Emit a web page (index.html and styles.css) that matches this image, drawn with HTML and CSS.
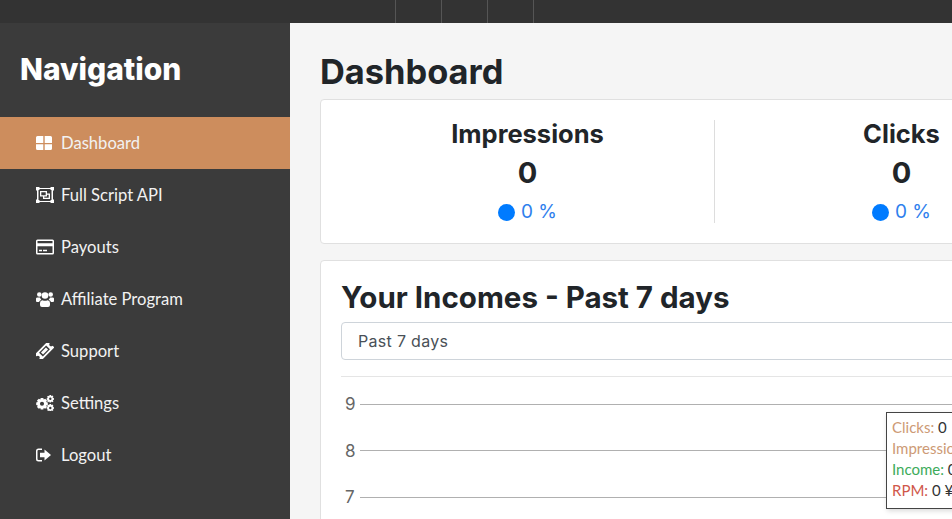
FILE: index.html
```html
<!DOCTYPE html>
<html lang="en">
<head>
    <meta charset="UTF-8">
    <meta name="viewport" content="width=device-width, initial-scale=1.0">
    <title>Dashboard</title>
    <link rel="stylesheet" href="styles.css">
</head>
<body>
    <div class="topbar">
        <span class="topbar-cell"></span>
        <span class="topbar-cell"></span>
        <span class="topbar-cell"></span>
    </div>

    <div class="layout">
        <nav class="sidebar">
            <h2 class="sidebar-title">Navigation</h2>
            <a class="nav-item active" href="#">
                <svg class="nav-icon" viewBox="0 0 18 16"><path d="M0 2.500Q0 1 1.500 1H7.300V8H0zM8.700 1H14.500Q16 1 16 2.500V8H8.700zM0 9.300H7.300V15H1.500Q0 15 0 13.500zM8.700 9.300H16V13.500Q16 15 14.500 15H8.700z"/></svg>
                Dashboard
            </a>
            <a class="nav-item" href="#">
                <svg class="nav-icon" viewBox="0 0 18 16"><path fill-rule="evenodd" d="M0 0H3.500V1H14.500V0H18V3.500H17V12.500H18V16H14.500V15H3.500V16H0V12.500H1V3.500H0zM2.500 3V13H3.500V14H14.500V13H15.500V3H14.500V2H3.500V3z"/><path fill-rule="evenodd" d="M4 4H11V6.500H14V12H7V9.500H4zM5.300 5.300V8.300H9.700V5.300zM11 7.800V9.500H8.300V10.700H12.700V7.800z"/></svg>
                Full Script API
            </a>
            <a class="nav-item" href="#">
                <svg class="nav-icon" viewBox="0 0 18 16"><path fill-rule="evenodd" d="M1.500 0.500H16.500Q18 0.500 18 2V14Q18 15.500 16.500 15.500H1.500Q0 15.500 0 14V2Q0 0.500 1.500 0.500zM1.500 2V4.200H16.500V2zM1.500 7.200V14H16.500V7.200zM3 10.800H6V12.300H3zM7 10.800H11V12.300H7z"/></svg>
                Payouts
            </a>
            <a class="nav-item" href="#">
                <svg class="nav-icon" viewBox="0 0 18 16"><circle cx="3.300" cy="3.500" r="2.300"/><circle cx="14.700" cy="3.500" r="2.300"/><circle cx="9" cy="4.500" r="3.300"/><path d="M0 10V7.500Q0 6.500 1.500 6.500H4Q4.500 8 5.300 8.800Q3.500 9.500 3 11H1Q0 11 0 10zM18 10V7.500Q18 6.500 16.500 6.500H14Q13.500 8 12.700 8.800Q14.500 9.500 15 11H17Q18 11 18 10zM4 12Q4 9.500 6.500 9.200Q9 10.500 11.500 9.200Q14 9.500 14 12V14Q14 16 12 16H6Q4 16 4 14z"/></svg>
                Affiliate Program
            </a>
            <a class="nav-item" href="#">
                <svg class="nav-icon" viewBox="0 0 18 16"><g transform="rotate(-45 8.500 8)"><path fill-rule="evenodd" d="M-1 3.500H18V6Q16 6.500 16 8Q16 9.500 18 10V12.500H-1V10Q1 9.500 1 8Q1 6.500 -1 6zM3.500 5.300V10.700H13.500V5.300z"/><rect x="5" y="6.500" width="7" height="3"/></g></svg>
                Support
            </a>
            <a class="nav-item" href="#">
                <svg class="nav-icon" viewBox="0 0 18 16"><path fill-rule="evenodd" d="M4.700 3H7.300L7.700 4.500L9.200 3.800L11 5.600L10.200 7L11.800 7.500V10L10.200 10.500L11 12L9.200 13.800L7.700 13L7.300 14.500H4.700L4.300 13L2.800 13.800L1 12L1.800 10.500L0.200 10V7.500L1.800 7L1 5.600L2.800 3.800L4.300 4.500zM6 6.700A2 2 0 1 0 6 10.800A2 2 0 1 0 6 6.700z"/><path fill-rule="evenodd" d="M13.500 0H15L15.300 1L16.500 0.600L17.500 2L16.500 2.800L18 3.300V4.700L16.700 5L17.500 6.200L16.300 7.200L15.300 6.500L15 7.500H13.500L13.200 6.500L12.200 7.200L11 6L11.800 5L10.700 4.700V3.300L11.800 3L11 1.800L12.200 0.700L13.200 1.300zM14.300 2.600A1.200 1.200 0 1 0 14.300 5A1.200 1.200 0 1 0 14.300 2.600z"/><path fill-rule="evenodd" d="M13.500 9H15L15.300 10L16.500 9.600L17.500 11L16.700 12L18 12.300V13.700L16.700 14L17.500 15L16.300 16L15.300 15.500L15 16H13.500L13.200 15.500L12.200 16L11 15L11.800 14L10.700 13.700V12.300L11.800 12L11 11L12.200 9.700L13.200 10zM14.300 11.800A1.200 1.200 0 1 0 14.300 14.200A1.200 1.200 0 1 0 14.300 11.800z"/></svg>
                Settings
            </a>
            <a class="nav-item" href="#">
                <svg class="nav-icon" viewBox="0 0 18 16"><path d="M2.500 1.500H6V3H2.500Q1.500 3 1.500 4V12Q1.500 13 2.500 13H6V14.500H2.500Q0 14.500 0 12V4Q0 1.500 2.500 1.500z"/><path d="M8.500 2.500L15 8L8.500 13.500V10.300H4V5.700H8.500z"/></svg>
                Logout
            </a>
        </nav>

        <main class="main">
            <div class="main-inner">
                <h1 class="page-title">Dashboard</h1>

                <section class="card stats">
                    <div class="stat">
                        <h3 class="stat-name">Impressions</h3>
                        <div class="stat-value">0</div>
                        <div class="stat-change"><span class="dot"></span>0 %</div>
                    </div>
                    <div class="stat">
                        <h3 class="stat-name">Clicks</h3>
                        <div class="stat-value">0</div>
                        <div class="stat-change"><span class="dot"></span>0 %</div>
                    </div>
                </section>

                <section class="card incomes">
                    <h2 class="card-title">Your Incomes - Past 7 days</h2>
                    <div class="select">Past 7 days</div>
                    <hr class="divider">
                    <div class="chart">
                        <div class="chart-row"><span class="chart-label">9</span><span class="chart-line"></span></div>
                        <div class="chart-row"><span class="chart-label">8</span><span class="chart-line"></span></div>
                        <div class="chart-row"><span class="chart-label">7</span><span class="chart-line"></span></div>
                        <div class="tooltip">
                            <div><span class="tip-clicks">Clicks:</span> 0</div>
                            <div><span class="tip-clicks">Impressions:</span> 0</div>
                            <div><span class="tip-income">Income:</span> 0 ¥</div>
                            <div><span class="tip-rpm">RPM:</span> 0 ¥</div>
                        </div>
                    </div>
                </section>
            </div>
        </main>
    </div>
</body>
</html>
```

FILE: styles.css
```css
html, body {
    height: 100%;
    margin: 0;
    overflow: hidden;
}
body {
    display: flex;
    flex-direction: column;
    font-family: Lato, "Open Sans", sans-serif;
    color: #212529;
    background-color: #f5f5f5;
}
.topbar {
    display: flex;
    flex: 0 0 23px;
    padding-left: 395px;
    background-color: #333;
}
.topbar-cell {
    width: 45px;
    border-left: 1px solid #555;
}
.topbar-cell:last-child {
    border-right: 1px solid #555;
}
.layout {
    display: flex;
    flex: 1;
    min-height: 0;
}
.sidebar {
    flex: 0 0 290px;
    background-color: #3b3b3b;
}
.sidebar-title {
    margin: 0;
    padding: 26px 20px 27px;
    font-family: Inter, sans-serif;
    font-size: 30px;
    font-weight: 800;
    line-height: 41px;
    color: #fff;
}
.nav-item {
    display: flex;
    align-items: center;
    gap: 7px;
    height: 52px;
    padding: 0 0 1px 36px;
    box-sizing: border-box;
    font-size: 16.600px;
    color: #f2f2f2;
    text-decoration: none;
}
.nav-item.active {
    background-color: #cd8d5d;
}
.nav-icon {
    flex: 0 0 18px;
    width: 18px;
    height: 16px;
    fill: #fff;
}
.main {
    flex: 1;
    min-width: 0;
    overflow: hidden;
}
.main-inner {
    width: 1100px;
    padding: 28px 0 0 30px;
}
.page-title {
    margin: 0 0 7px;
    font-family: Inter, sans-serif;
    font-size: 34.400px;
    font-weight: 700;
    line-height: 41px;
}
.card {
    background-color: #fff;
    border: 1px solid #e0e0e0;
    border-radius: 4px;
}
.stats {
    display: grid;
    grid-template-columns: 374px 373px;
    padding: 20px;
    margin-bottom: 16px;
}
.stat {
    height: 103px;
    text-align: center;
}
.stat:first-child {
    border-right: 1px solid #ddd;
}
.stat-name {
    margin: 0;
    font-family: Inter, sans-serif;
    font-size: 25.500px;
    font-weight: 700;
    line-height: 27px;
}
.stat-value {
    margin-top: 9px;
    font-family: Inter, sans-serif;
    font-size: 29px;
    font-weight: 700;
    line-height: 33px;
}
.stat-change {
    display: flex;
    align-items: center;
    justify-content: center;
    gap: 6px;
    margin-top: 10px;
    font-family: Inter, sans-serif;
    font-size: 19px;
    line-height: 26px;
    color: #2f80ed;
}
.dot {
    width: 17px;
    height: 17px;
    border-radius: 50%;
    background-color: #007bff;
}
.incomes {
    padding: 18px 20px 0;
    height: 400px;
}
.card-title {
    margin: 0 0 7px;
    font-family: Inter, sans-serif;
    font-size: 29.500px;
    font-weight: 700;
    line-height: 36px;
}
.select {
    height: 36px;
    padding-left: 16px;
    border: 1px solid #ced4da;
    border-radius: 4px;
    font-family: Inter, sans-serif;
    font-size: 16px;
    letter-spacing: 0.3px;
    line-height: 36px;
    color: #495057;
}
.divider {
    margin: 16px 0 0;
    border: 0;
    border-top: 1px solid #e5e5e5;
}
.chart {
    position: relative;
    padding-top: 4px;
}
.chart-row {
    display: flex;
    align-items: center;
    height: 46.500px;
}
.chart-label {
    width: 19px;
    padding-left: 4px;
    box-sizing: border-box;
    font-family: Inter, sans-serif;
    font-size: 17px;
    color: #666;
}
.chart-line {
    flex: 1;
    height: 1px;
    background-color: #b0b0b0;
}
.tooltip {
    position: absolute;
    left: 545px;
    top: 35px;
    width: 150px;
    height: 87px;
    padding: 4px 5px;
    border: 1px solid #444;
    background-color: #fff;
    box-shadow: 1px 2px 5px rgba(0,0,0,0.15);
    font-size: 15px;
    line-height: 21px;
    color: #333;
}
.tip-clicks {
    color: #cd9a75;
}
.tip-income {
    color: #3cab5a;
}
.tip-rpm {
    color: #d0574a;
}
```
